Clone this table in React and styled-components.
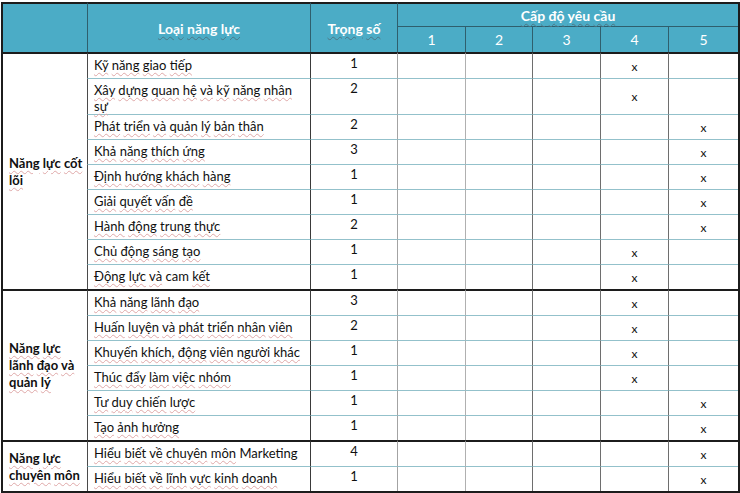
import React from 'react';
import styled, { createGlobalStyle } from 'styled-components';

const GlobalStyle = createGlobalStyle`
  html, body {
    margin: 0;
    padding: 0;
    background: #fff;
  }
  body {
    font-family: Lato, "Liberation Sans", sans-serif;
  }
`;

const Page = styled.div`
  padding: 2px 0 0 1px;
`;

const Table = styled.table`
  width: 737px;
  table-layout: fixed;
  border-collapse: separate;
  border-spacing: 0;
  border-right: 2px solid #1c1c1c;
  border-bottom: 2px solid #1c1c1c;
  font-size: 13px;
  color: #101010;
`;

const Col = styled.col`
  width: ${(p) => p.$w}px;
`;

const HeadRow = styled.tr`
  height: ${(p) => p.$h}px;
`;

const HeadCell = styled.th`
  box-sizing: border-box;
  padding: 0;
  background: #4bacc6;
  color: #fff;
  font-size: 14px;
  font-weight: ${(p) => (p.$light ? 400 : 700)};
  text-align: center;
  vertical-align: middle;
  border-top: ${(p) => (p.$sub ? '1px solid #2f5f6d' : '2px solid #1c1c1c')};
  border-left: ${(p) => (p.$edge ? '2px solid #1c1c1c' : '1px solid #2f5f6d')};
`;

const Row = styled.tr`
  height: ${(p) => (p.$first ? 26 : 25)}px;
`;

const GroupCell = styled.td`
  box-sizing: border-box;
  padding: 0 4px 0 6px;
  font-weight: 700;
  line-height: 17px;
  vertical-align: middle;
  border-left: 2px solid #1c1c1c;
  border-top: 2px solid #1c1c1c;
`;

const NameCell = styled.td`
  box-sizing: border-box;
  padding: 3px 4px 0 6px;
  line-height: 16px;
  vertical-align: top;
  border-left: 1px solid #4a4a4a;
  border-top: ${(p) => (p.$first ? '2px solid #1c1c1c' : '1px solid #93c1cb')};
`;

const WeightCell = styled.td`
  box-sizing: border-box;
  padding: 2px 0 0;
  line-height: 15px;
  text-align: center;
  vertical-align: top;
  border-left: 1px solid #3a3a3a;
  border-top: ${(p) => (p.$first ? '2px solid #1c1c1c' : '1px solid #93c1cb')};
`;

const LevelCell = styled.td`
  box-sizing: border-box;
  padding: 0;
  font-size: 12px;
  text-align: center;
  vertical-align: middle;
  border-left: 1px solid ${(p) => p.$line};
  border-top: ${(p) => (p.$first ? '2px solid #1c1c1c' : '1px solid #93c1cb')};
`;

const Word = styled.span`
  text-decoration: ${(p) => (p.$plain ? 'none' : 'underline wavy')};
  text-decoration-color: ${(p) => p.$tone};
  text-decoration-thickness: 1px;
  text-underline-offset: 2px;
`;

const ENGLISH = new Set(['cam', 'Marketing']);

const Spelled = ({ text, tone = '#dfa8a8' }) =>
  text.split('\n').map((line, li) => (
    <React.Fragment key={li}>
      {li > 0 && <br />}
      {line.split(' ').map((w, i) => (
        <React.Fragment key={i}>
          {i > 0 && ' '}
          <Word $tone={tone} $plain={ENGLISH.has(w.replace(/,$/, ''))}>
            {w}
          </Word>
        </React.Fragment>
      ))}
    </React.Fragment>
  ));

const WIDTHS = [86, 223, 87, 68, 67, 68, 68, 70];
const LEVEL_LINES = ['#a3a3a3', '#b0b0b0', '#6e6e6e', '#6e6e6e', '#6e6e6e'];

const GROUPS = [
  {
    title: 'Năng lực cốt\nlõi',
    items: [
      ['Kỹ năng giao tiếp', 1, 4],
      ['Xây dựng quan hệ và kỹ năng nhân\nsự', 2, 4],
      ['Phát triển và quản lý bản thân', 2, 5],
      ['Khả năng thích ứng', 3, 5],
      ['Định hướng khách hàng', 1, 5],
      ['Giải quyết vấn đề', 1, 5],
      ['Hành động trung thực', 2, 5],
      ['Chủ động sáng tạo', 1, 4],
      ['Động lực và cam kết', 1, 4],
    ],
  },
  {
    title: 'Năng lực\nlãnh đạo và\nquản lý',
    items: [
      ['Khả năng lãnh đạo', 3, 4],
      ['Huấn luyện và phát triển nhân viên', 2, 4],
      ['Khuyến khích, động viên người khác', 1, 4],
      ['Thúc đẩy làm việc nhóm', 1, 4],
      ['Tư duy chiến lược', 1, 5],
      ['Tạo ảnh hưởng', 1, 5],
    ],
  },
  {
    title: 'Năng lực\nchuyên môn',
    items: [
      ['Hiểu biết về chuyên môn Marketing', 4, 5],
      ['Hiểu biết về lĩnh vực kinh doanh', 1, 5],
    ],
  },
];

const App = () => (
  <Page>
    <GlobalStyle />
    <Table>
      <colgroup>
        {WIDTHS.map((w, i) => (
          <Col key={i} $w={w} />
        ))}
      </colgroup>
      <thead>
        <HeadRow $h={24}>
          <HeadCell rowSpan={2} $edge />
          <HeadCell rowSpan={2}>
            <Spelled text="Loại năng lực" tone="#4d7584" />
          </HeadCell>
          <HeadCell rowSpan={2}>
            <Spelled text="Trọng số" tone="#4d7584" />
          </HeadCell>
          <HeadCell colSpan={5}>
            <Spelled text="Cấp độ yêu cầu" tone="#4d7584" />
          </HeadCell>
        </HeadRow>
        <HeadRow $h={26}>
          {[1, 2, 3, 4, 5].map((n) => (
            <HeadCell key={n} $sub $light>
              {n}
            </HeadCell>
          ))}
        </HeadRow>
      </thead>
      <tbody>
        {GROUPS.map((g) =>
          g.items.map(([name, weight, level], i) => (
            <Row key={g.title + i} $first={i === 0}>
              {i === 0 && (
                <GroupCell rowSpan={g.items.length}>
                  <Spelled text={g.title} />
                </GroupCell>
              )}
              <NameCell $first={i === 0}>
                <Spelled text={name} />
              </NameCell>
              <WeightCell $first={i === 0}>{weight}</WeightCell>
              {LEVEL_LINES.map((line, k) => (
                <LevelCell key={k} $line={line} $first={i === 0}>
                  {level === k + 1 ? 'x' : ''}
                </LevelCell>
              ))}
            </Row>
          ))
        )}
      </tbody>
    </Table>
  </Page>
);

export default App;
